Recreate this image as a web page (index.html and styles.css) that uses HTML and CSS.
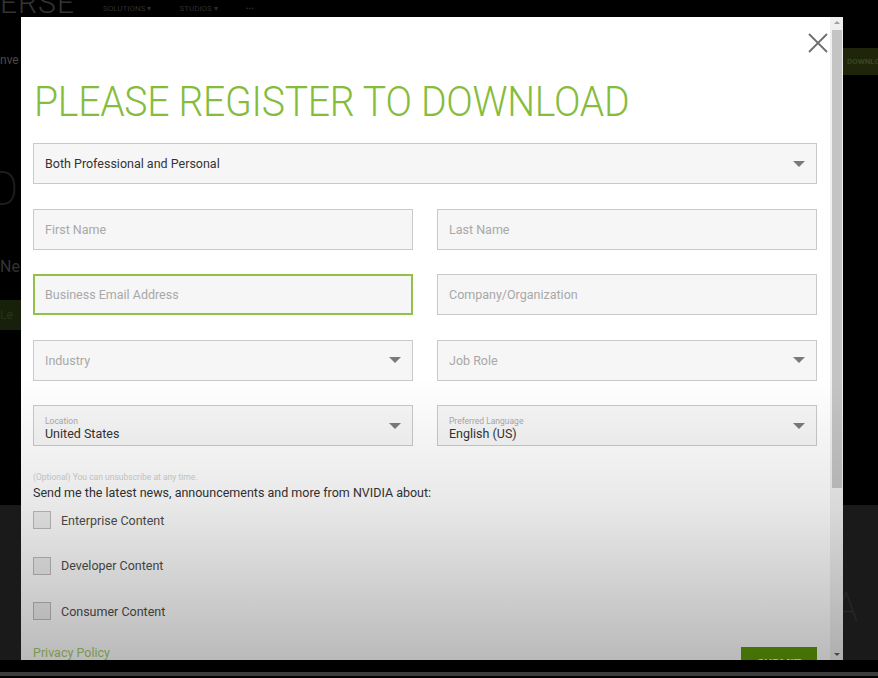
FILE: index.html
```html
<!DOCTYPE html>
<html>
<head>
<meta charset="utf-8">
<link rel="stylesheet" href="styles.css">
</head>
<body>
<div class="page">
  <div class="topbar">
    <span class="brand">ERSE</span>
    <span class="nav">SOLUTIONS &#9662;</span>
    <span class="nav">STUDIOS &#9662;</span>
    <span class="nav">&bull;&bull;&bull;</span>
  </div>
  <div class="hero">
    <div class="hero-left">
      <span class="ghost-sm">nve</span>
      <span class="ghost-big">O</span>
      <span class="ghost-md">Ne</span>
      <span class="ghost-btn">Le</span>
    </div>
    <div class="hero-right">
      <span class="ghost-dl">DOWNLOAD</span>
    </div>
  </div>
  <div class="lower">
    <span class="ghost-a">A</span>
  </div>
  <div class="footer-strip"></div>
</div>

<div class="modal">
  <div class="modal-body">
    <div class="close-row">
      <svg class="close" width="20" height="20" viewBox="0 0 20 20"><path d="M1 1 L19 19 M19 1 L1 19" stroke="#6e6e6e" stroke-width="1.8" fill="none"/></svg>
    </div>
    <h1 class="title">PLEASE REGISTER TO DOWNLOAD</h1>
    <div class="form">
      <div class="field full select"><span class="value">Both Professional and Personal</span><span class="caret"></span></div>
      <div class="field"><span class="ph">First Name</span></div>
      <div class="field"><span class="ph">Last Name</span></div>
      <div class="field focus"><span class="ph">Business Email Address</span></div>
      <div class="field"><span class="ph">Company/Organization</span></div>
      <div class="field select"><span class="ph">Industry</span><span class="caret"></span></div>
      <div class="field select"><span class="ph">Job Role</span><span class="caret"></span></div>
      <div class="field select labeled"><span class="stack"><span class="lbl">Location</span><span class="value">United States</span></span><span class="caret"></span></div>
      <div class="field select labeled"><span class="stack"><span class="lbl">Preferred Language</span><span class="value">English (US)</span></span><span class="caret"></span></div>
    </div>
    <p class="optional">(Optional) You can unsubscribe at any time.</p>
    <p class="send">Send me the latest news, announcements and more from NVIDIA about:</p>
    <ul class="checks">
      <li><span class="box"></span>Enterprise Content</li>
      <li><span class="box"></span>Developer Content</li>
      <li><span class="box"></span>Consumer Content</li>
    </ul>
    <div class="bottom-row">
      <a class="privacy">Privacy Policy</a>
      <span class="submit">SUBMIT</span>
    </div>
  </div>
  <div class="scrollbar">
    <span class="arrow up"></span>
    <span class="thumb"></span>
    <span class="track"></span>
    <span class="arrow down"></span>
  </div>
  <div class="fade"></div>
</div>
</body>
</html>
```
FILE: styles.css
```css
html, body {
  margin: 0;
  padding: 0;
}
body {
  width: 878px;
  height: 678px;
  overflow: hidden;
  background: #000;
  font-family: Roboto, "Liberation Sans", sans-serif;
  position: relative;
}
.page {
  display: flex;
  flex-direction: column;
  height: 678px;
}
.topbar {
  height: 17px;
  display: flex;
  align-items: flex-end;
  gap: 28px;
  overflow: hidden;
  color: #2a2a2a;
}
.brand {
  font-size: 30px;
  font-weight: 300;
  line-height: 28px;
  margin-top: -6px;
  letter-spacing: 1px;
  color: #333;
}
.nav {
  font-size: 8px;
  color: #2e2e2e;
  line-height: 17px;
}
.hero {
  height: 488px;
  display: flex;
  justify-content: space-between;
}
.hero-left {
  width: 21px;
  overflow: hidden;
  display: flex;
  flex-direction: column;
  color: #3a3a3a;
}
.ghost-sm { font-size: 12px; margin-top: 36px; color: #4a4a4a; }
.ghost-big { font-size: 48px; font-weight: 200; margin-top: 98px; line-height: 48px; color: #1e1e1e; margin-left: -14px; }
.ghost-md { font-size: 16px; margin-top: 44px; color: #333; }
.ghost-btn { margin-top: 24px; height: 30px; width: 21px; background: #17200a; color: #2a3318; font-size: 12px; line-height: 30px; }
.hero-right {
  width: 35px;
  overflow: hidden;
}
.ghost-dl {
  display: block;
  margin-top: 31px;
  height: 27px;
  width: 60px;
  background: #1e2508;
  color: #3b4520;
  font-size: 8px;
  font-weight: 700;
  line-height: 27px;
  padding-left: 4px;
}
.lower {
  height: 155px;
  background: #1a1a1a;
  display: flex;
  justify-content: flex-end;
  align-items: center;
}
.ghost-a { color: #262626; font-size: 40px; font-weight: 200; margin-right: 20px; margin-top: 50px; }
.footer-strip {
  height: 4px;
  margin-top: 12px;
  background: #3c3c3c;
}

.modal {
  position: absolute;
  left: 21px;
  top: 17px;
  width: 822px;
  height: 643px;
  background: #fff;
  display: flex;
  overflow: hidden;
}
.modal-body {
  flex: 1;
  padding: 16px 13px 0 12px;
  display: flex;
  flex-direction: column;
}
.close-row {
  display: flex;
  justify-content: flex-end;
  margin-right: -11px;
  height: 20px;
}
.title {
  margin: 23px 0 0 1px;
  font-size: 43px;
  font-weight: 300;
  line-height: 50px;
  color: #86bc3c;
  letter-spacing: -0.3px;
  transform: scaleX(0.91);
  transform-origin: left center;
  white-space: nowrap;
}
.form {
  margin-top: 17px;
  display: grid;
  grid-template-columns: 380px 380px;
  column-gap: 24px;
  row-gap: 24.5px;
}
.field {
  height: 41px;
  box-sizing: border-box;
  border: 1px solid #c9c9c9;
  background: #f6f6f6;
  display: flex;
  align-items: center;
  justify-content: space-between;
  padding: 0 11px 0 11px;
  font-size: 12.5px;
}
.full { grid-column: 1 / 3; }
.focus { border: 2px solid #90c24a; padding-left: 10px; }
.ph { color: #a8a8a8; }
.value { color: #333; }
.caret {
  width: 0;
  height: 0;
  border-left: 6px solid transparent;
  border-right: 6px solid transparent;
  border-top: 6px solid #7a7a7a;
}
.stack {
  display: flex;
  flex-direction: column;
  margin-top: 6px;
}
.lbl {
  font-size: 8.5px;
  color: #aaa;
  line-height: 10px;
}
.labeled .value { line-height: 15px; font-size: 12.5px; }
.optional {
  margin: 26px 0 0 0;
  font-size: 8.5px;
  color: #cfcfcf;
  line-height: 11px;
}
.send {
  margin: 2px 0 0 0;
  font-size: 12.5px;
  color: #333;
  line-height: 15px;
}
.checks {
  list-style: none;
  margin: 11px 0 0 0;
  padding: 0;
  display: flex;
  flex-direction: column;
  gap: 27.5px;
}
.checks li {
  display: flex;
  align-items: center;
  gap: 10px;
  font-size: 12.5px;
  color: #4e4e4e;
  height: 18px;
}
.box {
  width: 18px;
  height: 18px;
  box-sizing: border-box;
  border: 1px solid #bdbdbd;
  background: #efefef;
}
.bottom-row {
  margin-top: 27px;
  display: flex;
  justify-content: space-between;
  align-items: flex-start;
}
.privacy {
  font-size: 12.5px;
  line-height: 15px;
  color: #a8cc6c;
  margin-top: -2px;
}
.submit {
  width: 76px;
  height: 28px;
  background: #5e9a08;
  color: #e8f0dc;
  font-size: 12px;
  font-weight: 700;
  text-align: center;
  line-height: 34px;
}
.scrollbar {
  width: 13px;
  background: #efefef;
  display: flex;
  flex-direction: column;
  align-items: center;
}
.arrow {
  width: 0;
  height: 0;
  border-left: 3px solid transparent;
  border-right: 3px solid transparent;
}
.arrow.up { border-bottom: 3px solid #a0a0a0; margin-top: 4px; }
.arrow.down { border-top: 3px solid #606060; margin-bottom: 4px; }
.thumb {
  width: 10px;
  height: 458px;
  margin-top: 6px;
  background: #c4c4c4;
}
.track { flex: 1; }
.fade {
  position: absolute;
  left: 0;
  top: 0;
  width: 100%;
  height: 100%;
  pointer-events: none;
  background: linear-gradient(to bottom, rgba(0,0,0,0) 0%, rgba(0,0,0,0) 56%, rgba(0,0,0,0.09) 76%, rgba(0,0,0,0.27) 100%);
}
```
